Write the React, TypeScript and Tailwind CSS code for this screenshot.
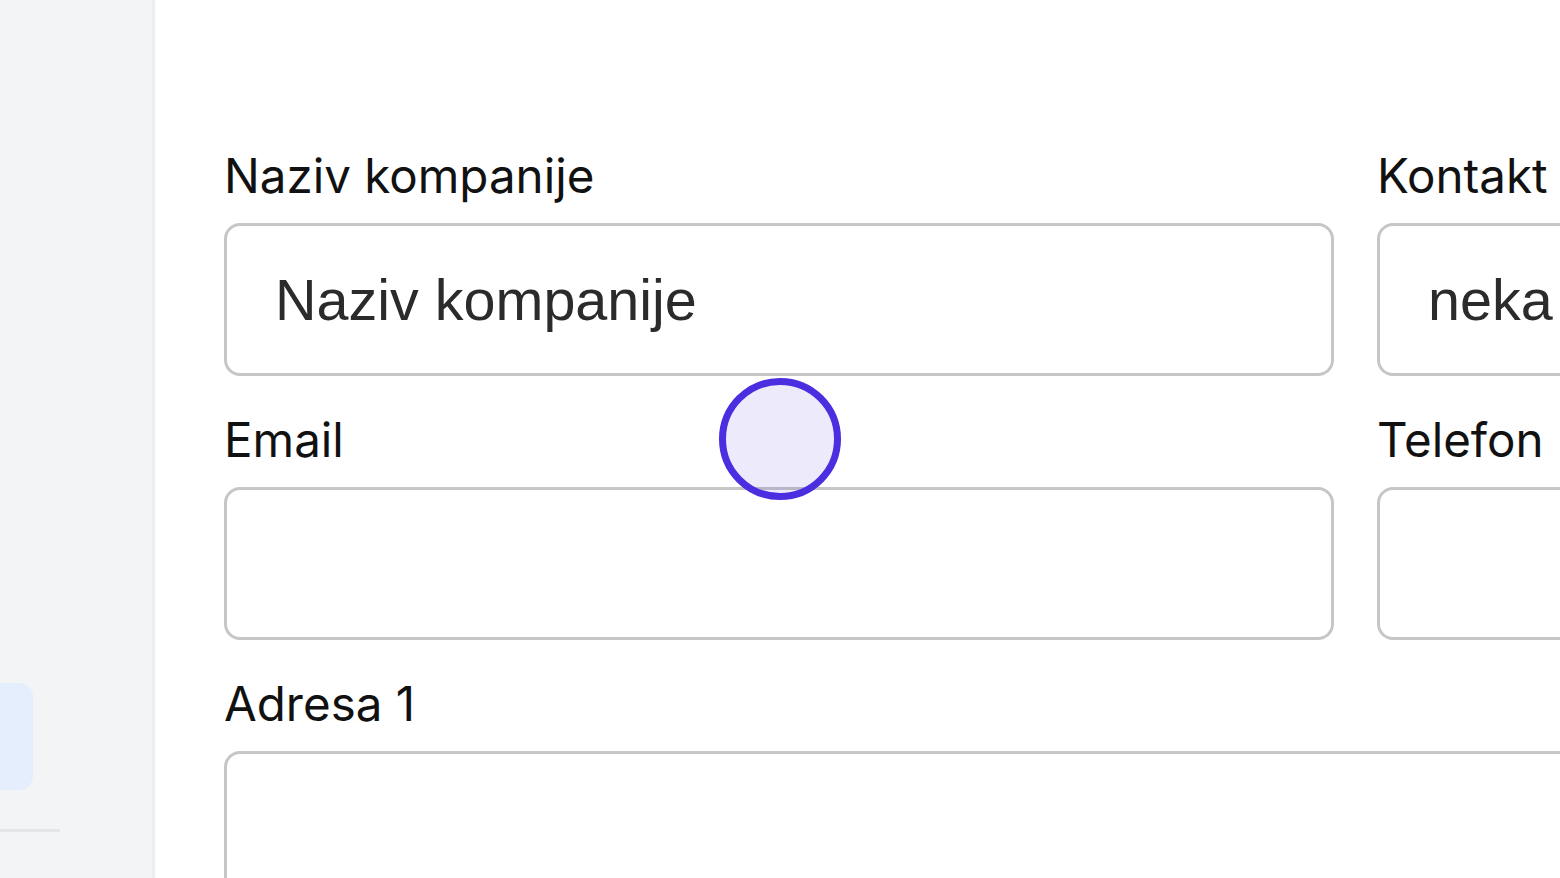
import React from 'react';

const labelCls =
  "block h-[55px] text-[47.5px] leading-[55px] text-[#111111] font-['Inter',sans-serif] whitespace-nowrap";
const inputCls =
  "block h-[153px] w-full rounded-[16px] border-[3px] border-[#c6c6c6] bg-white px-[48px] text-[57.5px] text-[#2b2b2b] font-['Liberation_Sans',Arial,sans-serif] placeholder:text-[#2b2b2b] outline-none";

function Field({ label, value, placeholder }: { label: string; value?: string; placeholder?: string }) {
  return (
    <div className="flex flex-col gap-[20px]">
      <label className={labelCls}>{label}</label>
      <input className={inputCls} defaultValue={value} placeholder={placeholder} readOnly />
    </div>
  );
}

export default function App() {
  return (
    <div className="relative flex h-[878px] w-[1560px] overflow-hidden bg-white">
      {/* sidebar */}
      <aside className="relative flex w-[155px] shrink-0 flex-col border-r-[3px] border-[#eceef1] bg-[#f3f4f6]">
        <div className="mt-[683px] h-[107px] w-[33px] rounded-r-[14px] bg-[#e5eefc]" />
        <div className="mt-[39px] h-[3px] w-[60px] bg-[#e3e5e8]" />
      </aside>

      {/* main form */}
      <main className="flex-1 pl-[69px] pt-[148px]">
        <div className="grid w-[1500px] grid-cols-[1110px_1fr] gap-x-[43px] gap-y-[36px]">
          <Field label="Naziv kompanije" placeholder="Naziv kompanije" />
          <Field label="Kontakt osoba" value="neka osoba" />
          <Field label="Email" />
          <Field label="Telefon" />
          <div className="col-span-2">
            <Field label="Adresa 1" />
          </div>
        </div>
      </main>

      {/* click indicator */}
      <div className="pointer-events-none absolute left-[719px] top-[378px] h-[122px] w-[122px] rounded-full border-[7px] border-[#4a2ee0] bg-[#4a2ee0]/10" />
    </div>
  );
}
